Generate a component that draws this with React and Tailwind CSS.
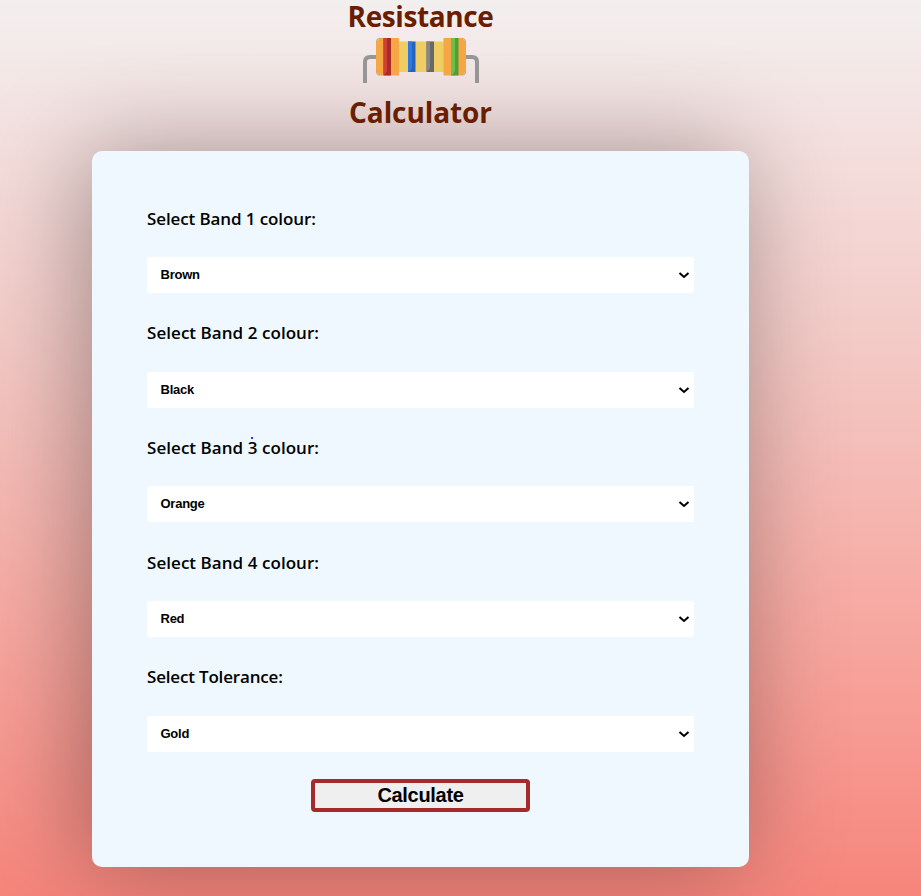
const fields = [
  { label: 'Select Band 1 colour:', value: 'Brown', top: 'mt-px', gap: 'mt-[26px]', tracking: 'tracking-[-0.11px]' },
  { label: 'Select Band 2 colour:', value: 'Black', top: 'mt-[28px]', gap: 'mt-[27px]', tracking: 'tracking-[0.05px]' },
  { label: 'Select Band 3 colour:', value: 'Orange', top: 'mt-[28px]', gap: 'mt-[26px]', tracking: 'tracking-[0.05px]', dot: true },
  { label: 'Select Band 4 colour:', value: 'Red', top: 'mt-[29px]', gap: 'mt-[26px]', tracking: 'tracking-[0.05px]' },
  { label: 'Select Tolerance:', value: 'Gold', top: 'mt-[28px]', gap: 'mt-[27px]', tracking: 'tracking-[-0.18px]' },
];

function Resistor() {
  return (
    <svg width="118" height="48" viewBox="361 37 118 48" className="block shrink-0">
      <g fill="none" stroke="#969696" strokeWidth="4">
        <path d="M365 83V62Q365 57 370 57H378" />
        <path d="M477 83V62Q477 57 472 57H464" />
      </g>
      <rect x="397" y="41.500" width="48" height="30.500" fill="#efcd64" />
      <path d="M380 38H399V75.500H380L376 71.500V42Z" fill="#f4a744" />
      <path d="M443.500 38H462L466 42V71.500L462 75.500H443.500Z" fill="#f4a744" />
      <path d="M376.300 42Q376.300 38.300 380 38.300M376.300 71.500Q376.300 75.200 380 75.200M462 38.300Q465.700 38.300 465.700 42M465.700 71.500Q465.700 75.200 462 75.200" fill="none" stroke="#b8925f" strokeWidth="0.8" />
      <rect x="383.500" y="38" width="7.500" height="37.500" fill="#aa2b27" />
      <path d="M383.500 38H387V71Q386 74 383.500 75Z" fill="#cf4035" />
      <rect x="408" y="41.500" width="7.500" height="30.500" fill="#2663c0" />
      <path d="M408 41.500H412V68Q411 71 408 71.500Z" fill="#3079e3" />
      <rect x="426.500" y="41.500" width="7.500" height="30.500" fill="#686868" />
      <path d="M426.500 41.500H430V68Q429 71 426.500 71.500Z" fill="#878787" />
      <rect x="451" y="38" width="7.500" height="37.500" fill="#559b37" />
      <path d="M451 38H455V71Q454 74 451 75Z" fill="#6cc04a" />
    </svg>
  );
}

function Field({ label, value, top, gap, tracking, dot }) {
  return (
    <div className={top}>
      <div className={`relative h-6 w-fit whitespace-nowrap font-['Open_Sans','Noto_Sans',sans-serif] text-[17px] font-semibold leading-6 ${tracking}`}>
        {label}
        {dot && <span className="absolute left-[104px] top-px size-[2px] bg-[#3030ff]" />}
      </div>
      <div className={`flex h-9 items-center justify-between rounded-[2px] bg-white pl-[13.5px] pr-1 ${gap}`}>
        <span className="font-['Liberation_Sans',Arial,sans-serif] text-[13px] font-bold leading-4 tracking-[-0.25px]">{value}</span>
        <svg width="12" height="8" viewBox="0 0 12 8" fill="none" stroke="#000" strokeWidth="2">
          <path d="M1.500 2L6 6L10.500 2" />
        </svg>
      </div>
    </div>
  );
}

export default function App() {
  return (
    <div className="h-[896px] w-[921px] border-t border-[#f0f0f0] bg-linear-to-b from-[#f3efef] via-[#f3c8c4] via-40% to-[#f6857c] text-black">
      <main className="ml-[92px] flex w-[657px] flex-col items-center">
        <h1 className="relative z-10 flex h-[150px] flex-col items-center font-['Open_Sans','Noto_Sans',sans-serif] text-[28px] font-bold leading-8 text-[#6b1d00]">
          <span className="h-9 leading-[30px] tracking-[-0.4px]">Resistance</span>
          <Resistor />
          <span className="mt-[11px] tracking-[-0.1px]">Calculator</span>
        </h1>
        <form className="flex h-[716px] w-full flex-col rounded-[10px] bg-[#eff8ff] px-[55px] pt-[55px] shadow-[-8px_0_100px_rgba(0,0,0,0.34)]">
          {fields.map((f) => (
            <Field key={f.label} {...f} />
          ))}
          <button type="button" className="mt-[27px] flex h-[33px] w-[219px] items-start justify-center self-center rounded-[4px] border-4 border-[#a52a2a] bg-[#efefef] font-['Liberation_Sans',Arial,sans-serif] text-[20px] font-bold leading-6 tracking-[-0.3px]">
            Calculate
          </button>
        </form>
      </main>
    </div>
  );
}
